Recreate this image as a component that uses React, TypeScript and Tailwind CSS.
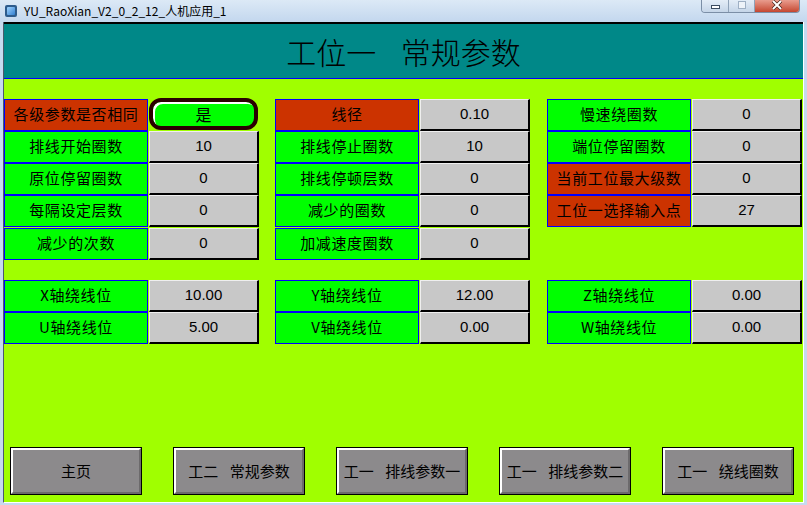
import React from "react";

const cjk = '"Noto Sans CJK SC", "Noto Sans", sans-serif';
const num = '"Liberation Sans", Arial, sans-serif';

type Cell = { label: string; value?: string; red?: boolean; pill?: boolean; gap?: boolean };

// Value field: raised grey box with a black bottom/right edge.
function ValueBox({ value }: { value: string }) {
  return (
    <div
      className="ml-px w-[110px] h-[32px] bg-[#c8c8c8] border-t border-l border-t-[#efefef] border-l-[#efefef] border-r-2 border-b-2 border-r-black border-b-black flex items-center justify-center text-[15px] text-black"
      style={{ fontFamily: num }}
    >
      {value}
    </div>
  );
}

function Pill() {
  return (
    <div className="ml-px w-[109px] h-[32px] -mt-px rounded-[12px] border-[4px] border-[#2a0000] bg-[#00ff00] shadow-[inset_2px_2px_0_#ffffff] flex items-center justify-center text-[16px] text-black">
      是
    </div>
  );
}

function Row({ cell }: { cell: Cell }) {
  return (
    <div className={`flex h-[32px] ${cell.gap ? "mt-px" : ""}`}>
      <div
        className={`w-[144px] h-[32px] border border-[#0000ff] flex items-center justify-center pb-[2px] text-[15px] tracking-[0.6px] text-black ${
          cell.red ? "bg-[#cc3300]" : "bg-[#00ff00]"
        }`}
      >
        {cell.label}
      </div>
      {cell.pill ? <Pill /> : <ValueBox value={cell.value ?? ""} />}
    </div>
  );
}

function Column({ cells, className = "" }: { cells: Cell[]; className?: string }) {
  return (
    <div className={`flex flex-col w-[255px] ${className}`}>
      {cells.map((c) => (
        <Row key={c.label} cell={c} />
      ))}
    </div>
  );
}

function NavButton({ text }: { text: string }) {
  return (
    <div className="w-[132px] h-[48px] border border-black">
      <div className="w-full h-full bg-[#8c8a8c] border-t-2 border-l-2 border-t-white border-l-white border-b-2 border-r-2 border-b-[#6c6a6c] border-r-[#6c6a6c] flex items-center justify-center text-[15px] text-black whitespace-pre [word-spacing:8px]">
        {text}
      </div>
    </div>
  );
}

const col1: Cell[] = [
  { label: "各级参数是否相同", red: true, pill: true },
  { label: "排线开始圈数", value: "10" },
  { label: "原位停留圈数", value: "0" },
  { label: "每隔设定层数", value: "0" },
  { label: "减少的次数", value: "0", gap: true },
];
const col2: Cell[] = [
  { label: "线径", value: "0.10", red: true },
  { label: "排线停止圈数", value: "10" },
  { label: "排线停顿层数", value: "0" },
  { label: "减少的圈数", value: "0" },
  { label: "加减速度圈数", value: "0", gap: true },
];
const col3: Cell[] = [
  { label: "慢速绕圈数", value: "0" },
  { label: "端位停留圈数", value: "0" },
  { label: "当前工位最大级数", value: "0", red: true },
  { label: "工位一选择输入点", value: "27", red: true },
];

export default function App() {
  return (
    <div className="w-[807px] h-[505px] bg-[#c6daef] flex flex-col overflow-hidden" style={{ fontFamily: cjk }}>
      {/* title bar */}
      <div className="h-[22px] flex items-start bg-gradient-to-b from-[#dce9f6] to-[#c3d7ee]">
        <div className="mt-[5px] ml-[5px] w-[12px] h-[12px] rounded-[2px] bg-[#2d5b8c] p-[2px]">
          <div className="w-full h-full rounded-[1px] bg-gradient-to-br from-[#9fd4ff] to-[#2f7fd0]" />
        </div>
        <div className="ml-[7px] mt-[3px] text-[12px] leading-[16px] text-black">YU_RaoXian_V2_0_2_12_人机应用_1</div>
        <div className="ml-auto mr-[7px] flex h-[13px] rounded-b-[4px] border border-t-0 border-[#7b8ea6] overflow-hidden">
          <div className="w-[27px] h-full bg-gradient-to-b from-[#e4edf7] to-[#c5d5e8] border-r border-[#8fa2b8] flex items-center justify-center">
            <div className="w-[9px] h-[4px] mt-[2px] bg-white border border-[#3c4c60]" />
          </div>
          <div className="w-[26px] h-full bg-gradient-to-b from-[#e4edf7] to-[#c5d5e8] border-r border-[#8fa2b8] flex items-center justify-center">
            <div className="w-[8px] h-[8px] -mt-[2px] border border-[#9fb0c4] bg-[#eef3f9]" />
          </div>
          <div className="w-[44px] h-full bg-gradient-to-b from-[#e89c8e] to-[#c4452f] flex items-center justify-center">
            <svg width="12" height="10" viewBox="0 0 12 10" className="-mt-[3px]">
              <path d="M2 1 L10 9 M10 1 L2 9" stroke="#3a1a12" strokeWidth="3.2" />
              <path d="M2 1 L10 9 M10 1 L2 9" stroke="#ffffff" strokeWidth="2" />
            </svg>
          </div>
        </div>
      </div>

      {/* HMI screen */}
      <div className="flex-1 mx-[3px] mb-[2px] flex flex-col bg-[#a0ff00] border-l border-l-[#4a5a6c] border-r border-r-white border-b border-b-white">
        <div className="h-[57px] bg-[#008888] border-t-2 border-t-black border-b border-b-[#0000ff] flex items-center justify-center">
          <span className="text-[30px] font-light text-black whitespace-pre [word-spacing:18px]">工位一 常规参数</span>
        </div>

        <div className="flex-1 flex flex-col pt-[20px]">
          <div className="flex">
            <Column cells={col1} />
            <Column cells={col2} className="ml-[16px]" />
            <Column cells={col3} className="ml-[17px]" />
          </div>

          <div className="flex mt-[20px]">
            <Column cells={[{ label: "X轴绕线位", value: "10.00" }, { label: "U轴绕线位", value: "5.00" }]} />
            <Column cells={[{ label: "Y轴绕线位", value: "12.00" }, { label: "V轴绕线位", value: "0.00" }]} className="ml-[16px]" />
            <Column cells={[{ label: "Z轴绕线位", value: "0.00" }, { label: "W轴绕线位", value: "0.00" }]} className="ml-[17px]" />
          </div>

          <div className="mt-auto mb-[7px] pl-[6px] flex gap-[31px]">
            <NavButton text="主页" />
            <NavButton text="工二 常规参数" />
            <NavButton text="工一 排线参数一" />
            <NavButton text="工一 排线参数二" />
            <NavButton text="工一 绕线圈数" />
          </div>
        </div>
      </div>
    </div>
  );
}
